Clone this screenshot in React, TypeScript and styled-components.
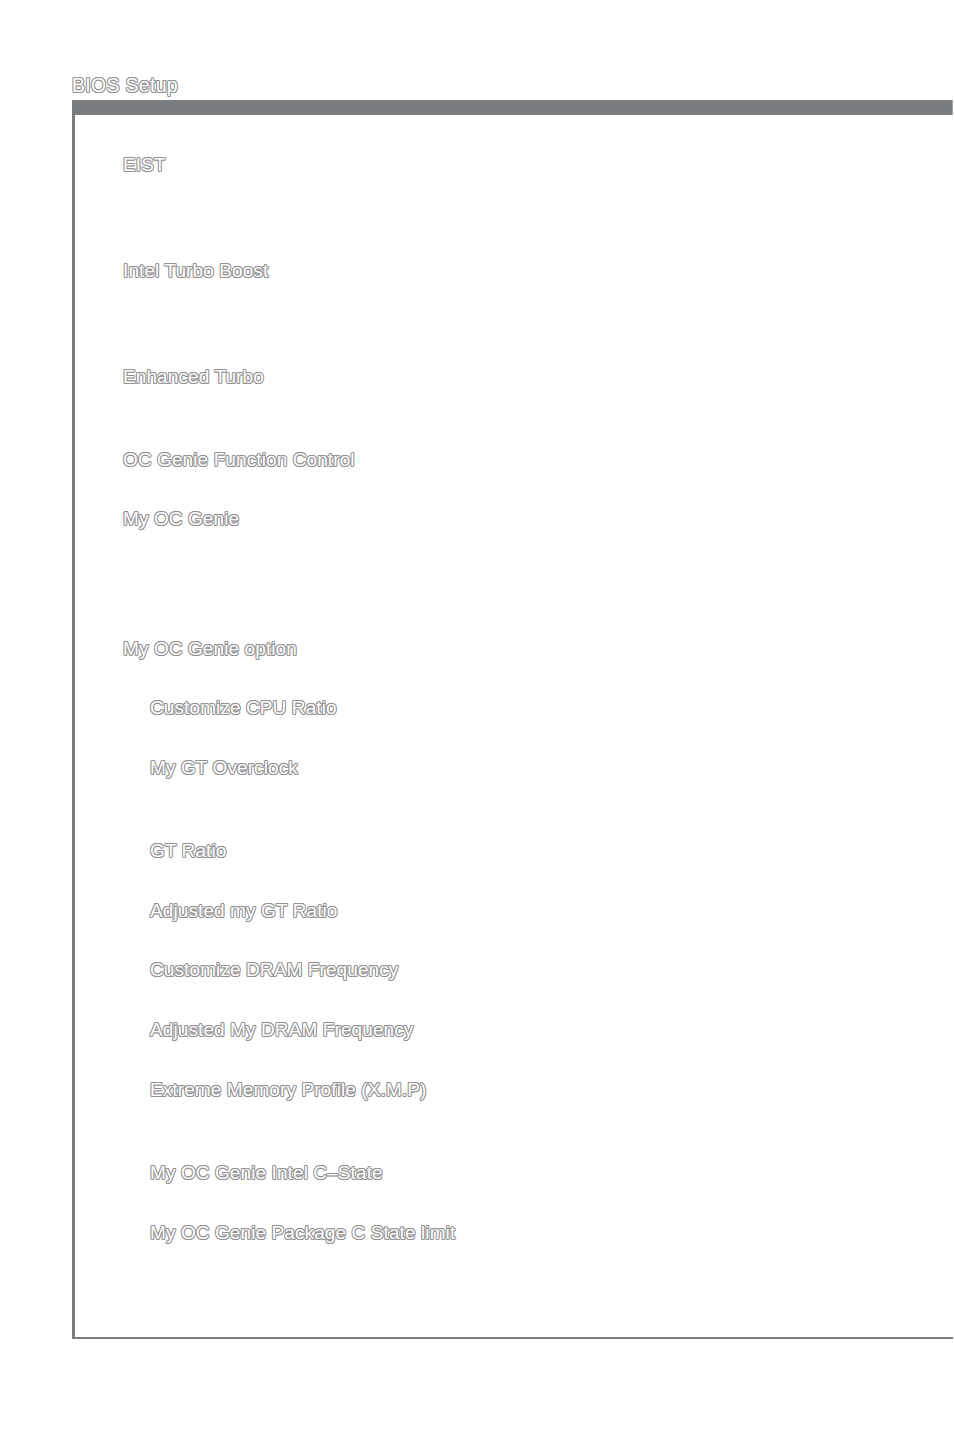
import React from 'react';
import styled, { createGlobalStyle } from 'styled-components';

const GlobalStyle = createGlobalStyle`
  body {
    margin: 0;
    background: #fff;
    font-family: "Liberation Sans", Arial, sans-serif;
  }
`;

// hollow grey lettering, like the printed manual
const outline = `
  color: #fff;
  letter-spacing: 0.1px;
  text-shadow:
    1px 0 0 #929292, -1px 0 0 #929292, 0 1px 0 #929292, 0 -1px 0 #929292,
    0.7px 0.7px 0 #929292, -0.7px -0.7px 0 #929292, 0.7px -0.7px 0 #929292, -0.7px 0.7px 0 #929292;
`;

const Page = styled.div`
  width: 954px;
  min-height: 1430px;
  padding-top: 75px;
  box-sizing: border-box;
`;

const Header = styled.div`
  margin-left: 72px;
  font-size: 19.5px;
  line-height: 20px;
  ${outline}
  letter-spacing: 0.3px;
`;

const Frame = styled.section`
  margin: 5px 0 0 72px;
  width: 881px;
  height: 1239px;
  box-sizing: border-box;
  border-left: 3px solid #7a7d80;
  border-bottom: 2px solid #7a7d80;
`;

const TitleBar = styled.div`
  height: 15px;
  margin: 1px 0 0 -3px;
  background: #7a7d80;
  border-right: 1px solid #a4a6a8;
`;

const List = styled.div`
  display: flex;
  flex-direction: column;
  align-items: flex-start;
  padding-top: 40px;
`;

const Item = styled.div<{ $indent: number; $space: number }>`
  margin-top: ${(p) => p.$space}px;
  margin-left: ${(p) => 48 + p.$indent * 27}px;
  font-size: 19px;
  line-height: 20px;
  white-space: nowrap;
  ${outline}
`;

const items: { label: string; indent: number; space: number }[] = [
  { label: 'EIST', indent: 0, space: 0 },
  { label: 'Intel Turbo Boost', indent: 0, space: 86 },
  { label: 'Enhanced Turbo', indent: 0, space: 86 },
  { label: 'OC Genie Function Control', indent: 0, space: 63 },
  { label: 'My OC Genie', indent: 0, space: 39 },
  { label: 'My OC Genie option', indent: 0, space: 110 },
  { label: 'Customize CPU Ratio', indent: 1, space: 39 },
  { label: 'My GT Overclock', indent: 1, space: 40 },
  { label: 'GT Ratio', indent: 1, space: 63 },
  { label: 'Adjusted my GT Ratio', indent: 1, space: 40 },
  { label: 'Customize DRAM Frequency', indent: 1, space: 39 },
  { label: 'Adjusted My DRAM Frequency', indent: 1, space: 40 },
  { label: 'Extreme Memory Profile (X.M.P)', indent: 1, space: 40 },
  { label: 'My OC Genie Intel C–State', indent: 1, space: 63 },
  { label: 'My OC Genie Package C State limit', indent: 1, space: 40 },
];

const App: React.FC = () => {
  return (
    <Page>
      <GlobalStyle />
      <Header>BIOS Setup</Header>
      <Frame>
        <TitleBar />
        <List>
          {items.map((it) => (
            <Item key={it.label} $indent={it.indent} $space={it.space}>
              {it.label}
            </Item>
          ))}
        </List>
      </Frame>
    </Page>
  );
};

export default App;
